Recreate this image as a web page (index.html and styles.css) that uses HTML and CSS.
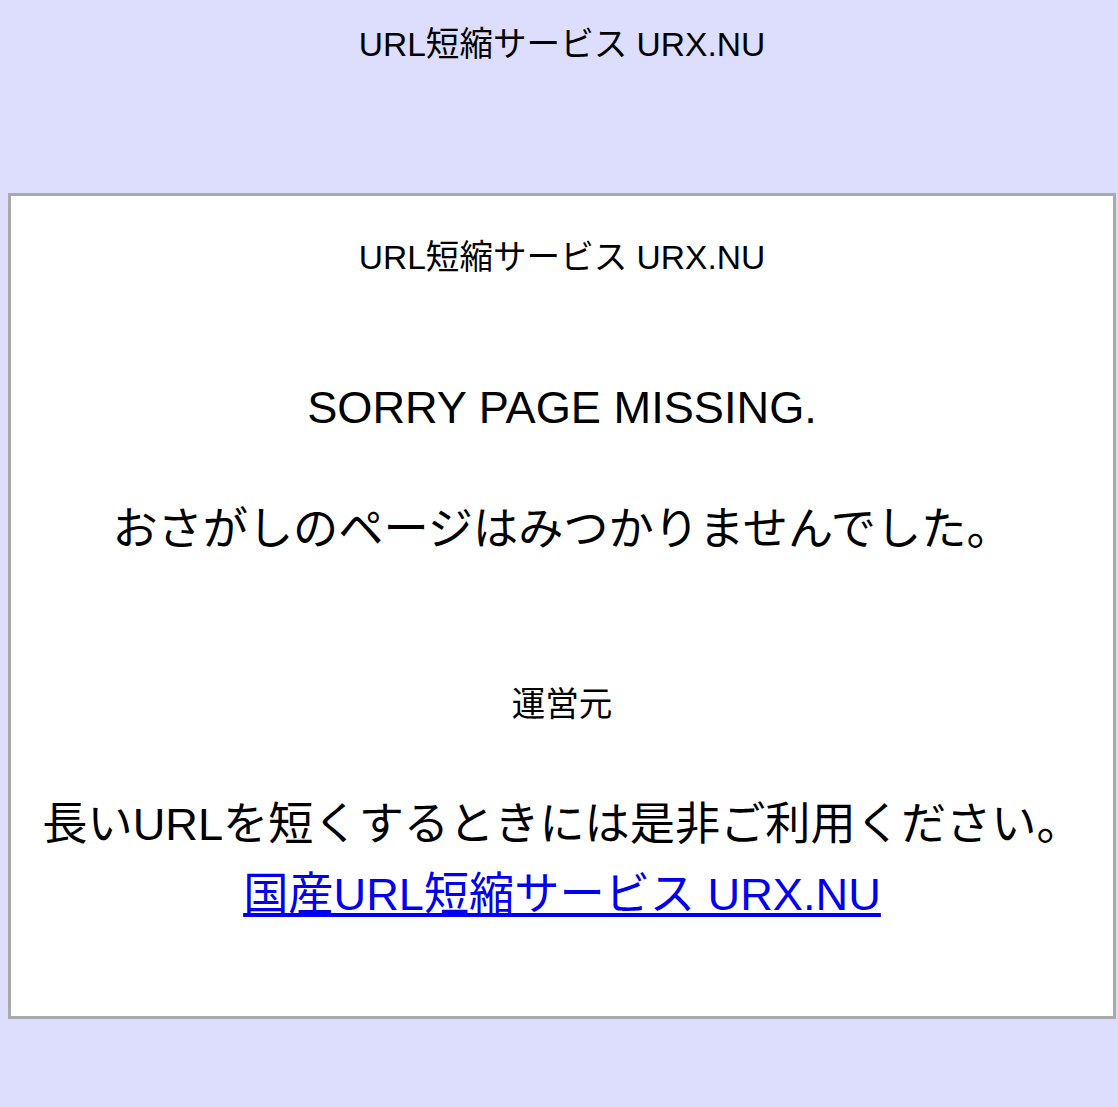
FILE: index.html
```html
<!DOCTYPE html>
<html lang="ja">
<head>
    <meta charset="UTF-8">
    <meta name="viewport" content="width=device-width, initial-scale=1.0">
    <title>URL短縮サービス URX.NU</title>
    <link rel="stylesheet" href="styles.css">
</head>
<body>
    <div class="top">URL短縮サービス URX.NU</div>

    <div class="box">
        <div class="title">URL短縮サービス URX.NU</div>
        <p class="big sorry">SORRY PAGE MISSING.</p>
        <p class="big missing">おさがしのページはみつかりませんでした。</p>
        <p class="owner">運営元</p>
        <p class="big promo">長いURLを短くするときには是非ご利用ください。</p>
        <p class="big link"><a href="#">国産URL短縮サービス URX.NU</a></p>
    </div>
</body>
</html>
```

FILE: styles.css
```css
body {
    margin: 8px 2px 8px 8px;
    background-color: #ddddfd;
    font-family: "Liberation Sans", "Noto Sans CJK JP", sans-serif;
    color: #000;
    text-align: center;
}

p {
    margin: 0;
}

.top {
    font-size: 33.6px;
    line-height: 40px;
    padding-top: 17px;
    margin-bottom: 128px;
}

.box {
    background-color: #fff;
    border: 3px solid #aaaaaa;
    padding: 42px 0 95px;
}

.title {
    font-size: 33.6px;
    line-height: 40px;
}

.big {
    font-size: 45.2px;
    line-height: 52px;
}

.sorry {
    margin-top: 104px;
}

.missing {
    margin-top: 70px;
}

.owner {
    font-size: 33.6px;
    line-height: 40px;
    margin-top: 129px;
}

.promo {
    margin-top: 74px;
}

.link {
    margin-top: 18px;
}

.link a {
    color: #0000ee;
}
```
